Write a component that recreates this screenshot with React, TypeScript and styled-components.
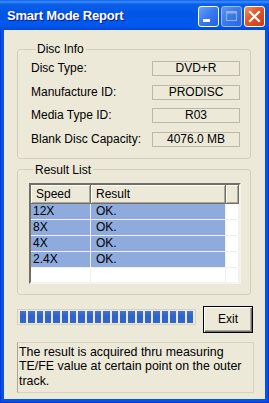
import React from "react";
import styled, { createGlobalStyle } from "styled-components";

const GlobalStyle = createGlobalStyle`
  html, body { margin: 0; padding: 0; background: #ffffff; }
  body { font-family: "Liberation Sans", Arial, sans-serif; }
  * { box-sizing: border-box; }
`;

const Window = styled.div`
  width: 269px;
  height: 403px;
  display: flex;
  flex-direction: column;
  background: #0055e5;
  border: 1px solid #0831d9;
  border-top: none;
`;

const TitleBar = styled.div`
  height: 30px;
  margin: 0 -1px;
  flex: none;
  display: flex;
  align-items: center;
  justify-content: space-between;
  padding: 0 4px 0 7px;
  background: linear-gradient(
    to bottom,
    #0a5fe8 0%,
    #3d8bff 6%,
    #0a5fe8 14%,
    #0055e5 45%,
    #0058ee 85%,
    #0049d6 100%
  );
`;

const Title = styled.span`
  color: #ffffff;
  font-family: "Liberation Sans", Arial, sans-serif;
  font-weight: bold;
  font-size: 13px;
  letter-spacing: -0.2px;
  text-shadow: 1px 1px 0 #0a1a7a;
`;

const Controls = styled.div`
  display: flex;
  gap: 2px;
  margin-top: 2px;
`;

const CtrlButton = styled.div<{ $variant: "min" | "max" | "close" }>`
  width: 21px;
  height: 21px;
  border-radius: 3px;
  border: 1px solid ${(p) => (p.$variant === "max" ? "#9bbcf5" : "#ffffff")};
  display: flex;
  align-items: center;
  justify-content: center;
  background: ${(p) =>
    p.$variant === "close"
      ? "linear-gradient(135deg, #f0906a 0%, #e35a2f 40%, #c83c14 100%)"
      : p.$variant === "max"
      ? "linear-gradient(135deg, #5a95f5 0%, #3a78ee 50%, #2a65e0 100%)"
      : "linear-gradient(135deg, #6aa2ff 0%, #3a7cf2 45%, #2160dc 100%)"};
`;

const Client = styled.div`
  flex: 1;
  margin: 0 3px 3px 3px;
  background: #ece9d8;
  display: flex;
  flex-direction: column;
  align-items: flex-start;
  padding: 12px 0 0 13px;
`;

const Group = styled.fieldset<{ $pt: number; $pb: number; $pl: number; $pr: number; $mt?: number }>`
  margin: ${(p) => p.$mt ?? 0}px 0 0 0;
  width: 234px;
  border: 1px solid #d0d0bf;
  border-radius: 3px;
  padding: ${(p) => `${p.$pt}px ${p.$pr}px ${p.$pb}px ${p.$pl}px`};
  min-width: 0;
`;

const Legend = styled.legend`
  font-size: 12px;
  line-height: 14px;
  color: #000000;
  padding: 0 2px 0 1px;
  margin-left: 5px;
`;

const InfoGrid = styled.div`
  display: grid;
  grid-template-columns: 1fr 88px;
  grid-auto-rows: 15px;
  row-gap: 8.67px;
`;

const Label = styled.span`
  font-size: 12px;
  line-height: 15px;
  color: #000000;
  white-space: nowrap;
`;

const ValueBox = styled.div`
  border: 1px solid #bdb9a9;
  background: #ece9d8;
  font-size: 12px;
  line-height: 13px;
  text-align: center;
  color: #000000;
`;

const ListView = styled.div`
  width: 212px;
  height: 101px;
  border-style: solid;
  border-width: 2px;
  border-color: #716f64 #f4f3ee #f4f3ee #716f64;
  box-shadow: inset 0 0 0 0 transparent;
  background: #ffffff;
  display: grid;
  grid-template-columns: 60px 135px 1fr;
  grid-template-rows: 19px repeat(4, 16px) 1fr;
  overflow: hidden;
`;

const HeaderCell = styled.div<{ $pl: number }>`
  background: #ece9d8;
  border-right: 1px solid #716f64;
  border-bottom: 1px solid #716f64;
  box-shadow: inset 1px 1px 0 #ffffff, inset -1px -1px 0 #aca899;
  font-size: 12px;
  line-height: 18px;
  padding-left: ${(p) => p.$pl}px;
  color: #000000;
`;

const Cell = styled.div<{ $selected?: boolean; $pl?: number }>`
  background: ${(p) => (p.$selected ? "#8fabdd" : "#ffffff")};
  border-right: 1px solid #f0f0f0;
  border-bottom: 1px solid #f0f0f0;
  font-size: 12px;
  line-height: 15px;
  padding-left: ${(p) => p.$pl ?? 0}px;
  color: #000000;
  white-space: nowrap;
`;

const FillerCell = styled.div`
  background: #ffffff;
  border-right: 1px solid #f0f0f0;
`;

const ActionRow = styled.div`
  margin-top: 11px;
  display: flex;
  align-items: flex-start;
  gap: 7px;
`;

const Progress = styled.div`
  margin-top: 3px;
  width: 179px;
  height: 16px;
  border: 1px solid #d6d3c3;
  padding: 1px 2px;
  display: flex;
  gap: 2px;
`;

const Block = styled.div`
  flex: 1;
  background: linear-gradient(to bottom, #3f72d4 0%, #2f62c8 50%, #3468cc 100%);
`;

const ExitButton = styled.button`
  width: 50px;
  height: 27px;
  background: #ece9d8;
  border: 1px solid #000000;
  box-shadow: inset 1px 1px 0 #ffffff, inset -1px -1px 0 #716f64, inset -2px -2px 0 #aca899;
  font-family: "Liberation Sans", Arial, sans-serif;
  font-size: 12px;
  color: #000000;
  padding: 0;
  margin: 0;
`;

const Note = styled.div`
  margin-top: 9px;
  width: 237px;
  height: 51px;
  border: 1px solid #d5d2c2;
  border-left-color: #a9a696;
  font-size: 12.4px;
  line-height: 14.5px;
  padding: 2px 0 0 1px;
  color: #000000;
`;

const info: [string, string][] = [
  ["Disc Type:", "DVD+R"],
  ["Manufacture ID:", "PRODISC"],
  ["Media Type ID:", "R03"],
  ["Blank Disc Capacity:", "4076.0 MB"],
];

const results: [string, string][] = [
  ["12X", "OK."],
  ["8X", "OK."],
  ["4X", "OK."],
  ["2.4X", "OK."],
];

export default function App() {
  return (
    <>
      <GlobalStyle />
      <Window>
        <TitleBar>
          <Title>Smart Mode Report</Title>
          <Controls>
            <CtrlButton $variant="min">
              <svg width="19" height="19" viewBox="0 0 19 19">
                <rect x="4" y="12" width="7" height="3" fill="#ffffff" />
              </svg>
            </CtrlButton>
            <CtrlButton $variant="max">
              <svg width="19" height="19" viewBox="0 0 19 19">
                <rect x="4.5" y="4.5" width="10" height="9" fill="none" stroke="#8fb2f2" strokeWidth="1" />
                <rect x="4.5" y="4.5" width="10" height="2" fill="#8fb2f2" />
              </svg>
            </CtrlButton>
            <CtrlButton $variant="close">
              <svg width="19" height="19" viewBox="0 0 19 19">
                <path d="M5 5 L14 14 M14 5 L5 14" stroke="#ffffff" strokeWidth="2.2" strokeLinecap="square" />
              </svg>
            </CtrlButton>
          </Controls>
        </TitleBar>
        <Client>
          <Group $pt={5} $pb={11} $pl={13} $pr={10}>
            <Legend>Disc Info</Legend>
            <InfoGrid>
              {info.map(([l, v]) => (
                <React.Fragment key={l}>
                  <Label>{l}</Label>
                  <ValueBox>{v}</ValueBox>
                </React.Fragment>
              ))}
            </InfoGrid>
          </Group>
          <Group $pt={6} $pb={10} $pl={11} $pr={9} $mt={4}>
            <Legend>Result List</Legend>
            <ListView>
              <HeaderCell $pl={5}>Speed</HeaderCell>
              <HeaderCell $pl={5}>Result</HeaderCell>
              <HeaderCell $pl={0} />
              {results.map(([s, r]) => (
                <React.Fragment key={s}>
                  <Cell $selected $pl={2}>{s}</Cell>
                  <Cell $selected $pl={5}>{r}</Cell>
                  <Cell />
                </React.Fragment>
              ))}
              <FillerCell />
              <FillerCell />
              <FillerCell />
            </ListView>
          </Group>
          <ActionRow>
            <Progress>
              {Array.from({ length: 21 }).map((_, i) => (
                <Block key={i} />
              ))}
            </Progress>
            <ExitButton>Exit</ExitButton>
          </ActionRow>
          <Note>
            The result is acquired thru measuring TE/FE value at certain point on the outer track.
          </Note>
        </Client>
      </Window>
    </>
  );
}
